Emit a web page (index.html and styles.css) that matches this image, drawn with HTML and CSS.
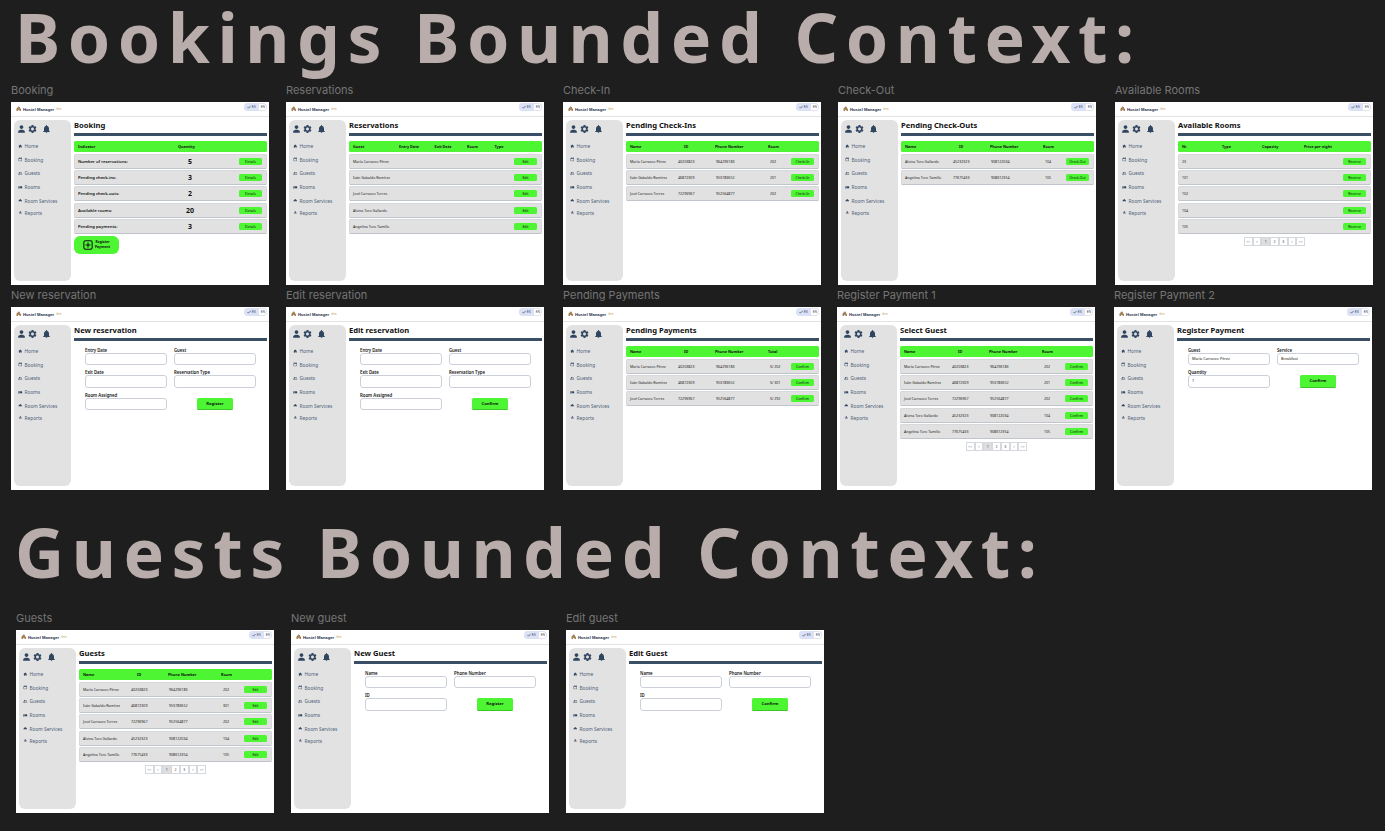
FILE: index.html
```html
<!DOCTYPE html>
<html lang="en">
<head>
  <meta charset="UTF-8">
  <meta name="viewport" content="width=device-width, initial-scale=1.0">
  <title>Hostel Manager bounded contexts</title>
  <link rel="stylesheet" href="styles.css">
</head>
<body>
  <svg class="sprite" xmlns="http://www.w3.org/2000/svg">
    <symbol id="i-home" viewBox="0 0 24 24"><path d="M10 20v-6h4v6h5v-8h3L12 3 2 12h3v8z"/></symbol>
    <symbol id="i-cal" viewBox="0 0 24 24"><path d="M19 4h-1V2h-2v2H8V2H6v2H5a2 2 0 0 0-2 2v14a2 2 0 0 0 2 2h14a2 2 0 0 0 2-2V6a2 2 0 0 0-2-2zm0 16H5V9h14z"/></symbol>
    <symbol id="i-group" viewBox="0 0 24 24"><path d="M16 11c1.66 0 2.99-1.34 2.99-3S17.66 5 16 5s-3 1.34-3 3 1.34 3 3 3zm-8 0c1.66 0 2.99-1.34 2.99-3S9.66 5 8 5 5 6.34 5 8s1.34 3 3 3zm0 2c-2.33 0-7 1.17-7 3.5V19h14v-2.5C15 14.17 10.33 13 8 13zm8 0c-.29 0-.62.02-.97.05 1.16.84 1.97 1.97 1.97 3.45V19h6v-2.5c0-2.33-4.67-3.5-7-3.5z"/></symbol>
    <symbol id="i-bed" viewBox="0 0 24 24"><path d="M7 13c1.66 0 3-1.34 3-3S8.66 7 7 7s-3 1.34-3 3 1.34 3 3 3zm12-6h-8v7H3V5H1v15h2v-3h18v3h2v-9c0-2.21-1.79-4-4-4z"/></symbol>
    <symbol id="i-service" viewBox="0 0 24 24"><path d="M2 17h20v2H2zm11.84-9.21c.1-.24.16-.51.16-.79 0-1.1-.9-2-2-2s-2 .9-2 2c0 .28.06.55.16.79C6.25 8.6 3.27 11.93 3 16h18c-.27-4.07-3.25-7.4-7.16-8.21z"/></symbol>
    <symbol id="i-chart" viewBox="0 0 24 24"><path d="M5 13h4v6H5zM10 5h4v14h-4zm5 8h4v6h-4z"/></symbol>
    <symbol id="i-person" viewBox="0 0 24 24"><path d="M12 12c2.5 0 4.5-2.1 4.5-4.6S14.500 2.800 12 2.800 7.500 4.900 7.500 7.400 9.500 12 12 12zm0 1.500c-3 0-8 1.500-8 4.200V21h16v-3.300c0-2.700-5-4.200-8-4.200z"/></symbol>
    <symbol id="i-gear" viewBox="0 0 24 24"><path d="M19.140 12.940c.04-.3.06-.61.06-.94 0-.32-.02-.64-.07-.94l2.030-1.580c.18-.14.23-.41.12-.61l-1.920-3.320c-.12-.22-.37-.29-.59-.22l-2.390.96c-.5-.38-1.030-.7-1.620-.94l-.36-2.540c-.04-.24-.24-.41-.48-.41h-3.840c-.24 0-.43.17-.47.41l-.36 2.540c-.59.24-1.130.57-1.620.94l-2.390-.96c-.22-.08-.47 0-.59.22L2.740 8.870c-.12.21-.08.47.12.61l2.030 1.580c-.05.3-.09.63-.09.94s.02.64.07.94l-2.030 1.580c-.18.14-.23.41-.12.61l1.920 3.320c.12.22.37.29.59.22l2.390-.96c.5.38 1.030.7 1.620.94l.36 2.540c.05.24.24.41.48.41h3.840c.24 0 .44-.17.47-.41l.36-2.540c.59-.24 1.130-.56 1.620-.94l2.390.96c.22.08.47 0 .59-.22l1.920-3.320c.12-.22.07-.47-.12-.61l-2.010-1.580zM12 15.600c-1.980 0-3.600-1.620-3.600-3.600s1.620-3.600 3.600-3.600 3.600 1.620 3.600 3.600-1.620 3.600-3.600 3.600z"/></symbol>
    <symbol id="i-bell" viewBox="0 0 24 24"><path d="M12 22c1.100 0 2-.9 2-2h-4c0 1.100.9 2 2 2zm6-6v-5c0-3.070-1.630-5.640-4.500-6.320V4c0-.83-.67-1.500-1.500-1.500s-1.500.67-1.500 1.500v.68C7.640 5.360 6 7.920 6 11v5l-2 2v1h16v-1z"/></symbol>
    <symbol id="i-hostel" viewBox="0 0 24 24"><path d="M2 22V11l5-3V4l5-2 5 2v6l5 3v9h-7v-5h-6v5z"/></symbol>
    <symbol id="i-key" viewBox="0 0 24 16"><path d="M1 8a4 4 0 1 0 8 0 4 4 0 1 0-8 0M9 8h14M18 8v4M22 8v3" fill="none" stroke="currentColor" stroke-width="2.500"/></symbol>
    <symbol id="i-check" viewBox="0 0 24 24"><path d="M3 13l6 6L21 6" fill="none" stroke="currentColor" stroke-width="4"/></symbol>
    <symbol id="i-plus" viewBox="0 0 24 24"><rect x="2" y="2" width="20" height="20" rx="4" fill="none" stroke="currentColor" stroke-width="2.500"/><path d="M12 6v12M6 12h12" fill="none" stroke="currentColor" stroke-width="2.500"/></symbol>
  </svg>

  <h1 class="context context-bookings">Bookings Bounded Context:</h1>
  <h1 class="context context-guests">Guests Bounded Context:</h1>

  <!-- Booking -->
  <section class="frame f-booking">
    <p class="frame-name">Booking</p>
    <div class="screen">
      <header class="topbar"><svg class="logo"><use href="#i-hostel"/></svg><b>Hostel Manager</b><svg class="key"><use href="#i-key"/></svg><span class="lang"><span class="lang-on"><svg class="tick"><use href="#i-check"/></svg>ES</span><span class="lang-off">EN</span></span></header>
      <div class="body">
        <aside class="sidebar">
          <div class="tools"><svg class="tool"><use href="#i-person"/></svg><svg class="tool"><use href="#i-gear"/></svg><svg class="tool bell"><use href="#i-bell"/></svg></div>
          <a class="nav"><svg><use href="#i-home"/></svg>Home</a><a class="nav"><svg><use href="#i-cal"/></svg>Booking</a><a class="nav"><svg><use href="#i-group"/></svg>Guests</a><a class="nav"><svg><use href="#i-bed"/></svg>Rooms</a><a class="nav"><svg><use href="#i-service"/></svg>Room Services</a><a class="nav nav-last"><svg><use href="#i-chart"/></svg>Reports</a>
        </aside>
        <main class="main">
          <h2 class="title">Booking</h2>
          <div class="table t-indicator">
            <div class="head"><span>Indicator</span><span class="qty-head">Quantity</span></div>
            <div class="row"><b>Number of reservations:</b><strong>5</strong><a class="btn">Details</a></div>
            <div class="row"><b>Pending check-ins:</b><strong>3</strong><a class="btn">Details</a></div>
            <div class="row"><b>Pending check-outs:</b><strong>2</strong><a class="btn">Details</a></div>
            <div class="row"><b>Available rooms:</b><strong>20</strong><a class="btn">Details</a></div>
            <div class="row"><b>Pending payments:</b><strong>3</strong><a class="btn">Details</a></div>
          </div>
          <a class="add-btn"><svg><use href="#i-plus"/></svg><span>Register<br>Payment</span></a>
        </main>
      </div>
    </div>
  </section>

  <!-- Reservations -->
  <section class="frame f-reservations">
    <p class="frame-name">Reservations</p>
    <div class="screen">
      <header class="topbar"><svg class="logo"><use href="#i-hostel"/></svg><b>Hostel Manager</b><svg class="key"><use href="#i-key"/></svg><span class="lang"><span class="lang-on"><svg class="tick"><use href="#i-check"/></svg>ES</span><span class="lang-off">EN</span></span></header>
      <div class="body">
        <aside class="sidebar">
          <div class="tools"><svg class="tool"><use href="#i-person"/></svg><svg class="tool"><use href="#i-gear"/></svg><svg class="tool bell"><use href="#i-bell"/></svg></div>
          <a class="nav"><svg><use href="#i-home"/></svg>Home</a><a class="nav"><svg><use href="#i-cal"/></svg>Booking</a><a class="nav"><svg><use href="#i-group"/></svg>Guests</a><a class="nav"><svg><use href="#i-bed"/></svg>Rooms</a><a class="nav"><svg><use href="#i-service"/></svg>Room Services</a><a class="nav nav-last"><svg><use href="#i-chart"/></svg>Reports</a>
        </aside>
        <main class="main">
          <h2 class="title">Reservations</h2>
          <div class="table t-reservations">
            <div class="head"><span>Guest</span><span>Entry Date</span><span>Exit Date</span><span>Room</span><span>Type</span></div>
            <div class="row"><span>María Carrasco Pérez</span><a class="btn">Edit</a></div>
            <div class="row"><span>Iván Gabaldo Ramírez</span><a class="btn">Edit</a></div>
            <div class="row"><span>José Carrasco Torres</span><a class="btn">Edit</a></div>
            <div class="row"><span>Alvina Toro Gallardo</span><a class="btn">Edit</a></div>
            <div class="row"><span>Angelina Toro Tamillo</span><a class="btn">Edit</a></div>
          </div>
        </main>
      </div>
    </div>
  </section>

  <!-- Check-In -->
  <section class="frame f-checkin">
    <p class="frame-name">Check-In</p>
    <div class="screen">
      <header class="topbar"><svg class="logo"><use href="#i-hostel"/></svg><b>Hostel Manager</b><svg class="key"><use href="#i-key"/></svg><span class="lang"><span class="lang-on"><svg class="tick"><use href="#i-check"/></svg>ES</span><span class="lang-off">EN</span></span></header>
      <div class="body">
        <aside class="sidebar">
          <div class="tools"><svg class="tool"><use href="#i-person"/></svg><svg class="tool"><use href="#i-gear"/></svg><svg class="tool bell"><use href="#i-bell"/></svg></div>
          <a class="nav"><svg><use href="#i-home"/></svg>Home</a><a class="nav"><svg><use href="#i-cal"/></svg>Booking</a><a class="nav"><svg><use href="#i-group"/></svg>Guests</a><a class="nav"><svg><use href="#i-bed"/></svg>Rooms</a><a class="nav"><svg><use href="#i-service"/></svg>Room Services</a><a class="nav nav-last"><svg><use href="#i-chart"/></svg>Reports</a>
        </aside>
        <main class="main">
          <h2 class="title">Pending Check-Ins</h2>
          <div class="table t-people">
            <div class="head"><span>Name</span><span>ID</span><span>Phone Number</span><span>Room</span></div>
            <div class="row"><span>María Carrasco Pérez</span><span>40203823</span><span>964296183</span><span>202</span><a class="btn">Check-In</a></div>
            <div class="row"><span>Iván Gabaldo Ramírez</span><span>46872309</span><span>953783652</span><span>201</span><a class="btn">Check-In</a></div>
            <div class="row"><span>José Carrasco Torres</span><span>72296967</span><span>952564877</span><span>202</span><a class="btn">Check-In</a></div>
          </div>
        </main>
      </div>
    </div>
  </section>

  <!-- Check-Out -->
  <section class="frame f-checkout">
    <p class="frame-name">Check-Out</p>
    <div class="screen">
      <header class="topbar"><svg class="logo"><use href="#i-hostel"/></svg><b>Hostel Manager</b><svg class="key"><use href="#i-key"/></svg><span class="lang"><span class="lang-on"><svg class="tick"><use href="#i-check"/></svg>ES</span><span class="lang-off">EN</span></span></header>
      <div class="body">
        <aside class="sidebar">
          <div class="tools"><svg class="tool"><use href="#i-person"/></svg><svg class="tool"><use href="#i-gear"/></svg><svg class="tool bell"><use href="#i-bell"/></svg></div>
          <a class="nav"><svg><use href="#i-home"/></svg>Home</a><a class="nav"><svg><use href="#i-cal"/></svg>Booking</a><a class="nav"><svg><use href="#i-group"/></svg>Guests</a><a class="nav"><svg><use href="#i-bed"/></svg>Rooms</a><a class="nav"><svg><use href="#i-service"/></svg>Room Services</a><a class="nav nav-last"><svg><use href="#i-chart"/></svg>Reports</a>
        </aside>
        <main class="main">
          <h2 class="title">Pending Check-Outs</h2>
          <div class="table t-people">
            <div class="head"><span>Name</span><span>ID</span><span>Phone Number</span><span>Room</span></div>
            <div class="row"><span>Alvina Toro Gallardo</span><span>45232323</span><span>908122034</span><span>104</span><a class="btn">Check-Out</a></div>
            <div class="row"><span>Angelina Toro Tamillo</span><span>77675433</span><span>908612354</span><span>105</span><a class="btn">Check-Out</a></div>
          </div>
        </main>
      </div>
    </div>
  </section>

  <!-- Available Rooms -->
  <section class="frame f-rooms">
    <p class="frame-name">Available Rooms</p>
    <div class="screen">
      <header class="topbar"><svg class="logo"><use href="#i-hostel"/></svg><b>Hostel Manager</b><svg class="key"><use href="#i-key"/></svg><span class="lang"><span class="lang-on"><svg class="tick"><use href="#i-check"/></svg>ES</span><span class="lang-off">EN</span></span></header>
      <div class="body">
        <aside class="sidebar">
          <div class="tools"><svg class="tool"><use href="#i-person"/></svg><svg class="tool"><use href="#i-gear"/></svg><svg class="tool bell"><use href="#i-bell"/></svg></div>
          <a class="nav"><svg><use href="#i-home"/></svg>Home</a><a class="nav"><svg><use href="#i-cal"/></svg>Booking</a><a class="nav"><svg><use href="#i-group"/></svg>Guests</a><a class="nav"><svg><use href="#i-bed"/></svg>Rooms</a><a class="nav"><svg><use href="#i-service"/></svg>Room Services</a><a class="nav nav-last"><svg><use href="#i-chart"/></svg>Reports</a>
        </aside>
        <main class="main">
          <h2 class="title">Available Rooms</h2>
          <div class="table t-rooms">
            <div class="head"><span>Nº</span><span>Type</span><span>Capacity</span><span>Price per night</span></div>
            <div class="row"><span>23</span><a class="btn">Reserve</a></div>
            <div class="row"><span>101</span><a class="btn">Reserve</a></div>
            <div class="row"><span>102</span><a class="btn">Reserve</a></div>
            <div class="row"><span>104</span><a class="btn">Reserve</a></div>
            <div class="row"><span>105</span><a class="btn">Reserve</a></div>
          </div>
          <nav class="pager"><a>&lt;&lt;</a><a>&lt;</a><a class="page-on">1</a><a>2</a><a>3</a><a>&gt;</a><a>&gt;&gt;</a></nav>
        </main>
      </div>
    </div>
  </section>

  <!-- New reservation -->
  <section class="frame f-newres">
    <p class="frame-name">New reservation</p>
    <div class="screen">
      <header class="topbar"><svg class="logo"><use href="#i-hostel"/></svg><b>Hostel Manager</b><svg class="key"><use href="#i-key"/></svg><span class="lang"><span class="lang-on"><svg class="tick"><use href="#i-check"/></svg>ES</span><span class="lang-off">EN</span></span></header>
      <div class="body">
        <aside class="sidebar">
          <div class="tools"><svg class="tool"><use href="#i-person"/></svg><svg class="tool"><use href="#i-gear"/></svg><svg class="tool bell"><use href="#i-bell"/></svg></div>
          <a class="nav"><svg><use href="#i-home"/></svg>Home</a><a class="nav"><svg><use href="#i-cal"/></svg>Booking</a><a class="nav"><svg><use href="#i-group"/></svg>Guests</a><a class="nav"><svg><use href="#i-bed"/></svg>Rooms</a><a class="nav"><svg><use href="#i-service"/></svg>Room Services</a><a class="nav nav-last"><svg><use href="#i-chart"/></svg>Reports</a>
        </aside>
        <main class="main">
          <h2 class="title">New reservation</h2>
          <form class="form">
            <div class="field"><label>Entry Date</label><div class="input"></div></div>
            <div class="field"><label>Guest</label><div class="input"></div></div>
            <div class="field"><label>Exit Date</label><div class="input"></div></div>
            <div class="field"><label>Reservation Type</label><div class="input"></div></div>
            <div class="field"><label>Room Assigned</label><div class="input"></div></div>
            <a class="submit">Register</a>
          </form>
        </main>
      </div>
    </div>
  </section>

  <!-- Edit reservation -->
  <section class="frame f-editres">
    <p class="frame-name">Edit reservation</p>
    <div class="screen">
      <header class="topbar"><svg class="logo"><use href="#i-hostel"/></svg><b>Hostel Manager</b><svg class="key"><use href="#i-key"/></svg><span class="lang"><span class="lang-on"><svg class="tick"><use href="#i-check"/></svg>ES</span><span class="lang-off">EN</span></span></header>
      <div class="body">
        <aside class="sidebar">
          <div class="tools"><svg class="tool"><use href="#i-person"/></svg><svg class="tool"><use href="#i-gear"/></svg><svg class="tool bell"><use href="#i-bell"/></svg></div>
          <a class="nav"><svg><use href="#i-home"/></svg>Home</a><a class="nav"><svg><use href="#i-cal"/></svg>Booking</a><a class="nav"><svg><use href="#i-group"/></svg>Guests</a><a class="nav"><svg><use href="#i-bed"/></svg>Rooms</a><a class="nav"><svg><use href="#i-service"/></svg>Room Services</a><a class="nav nav-last"><svg><use href="#i-chart"/></svg>Reports</a>
        </aside>
        <main class="main">
          <h2 class="title">Edit reservation</h2>
          <form class="form">
            <div class="field"><label>Entry Date</label><div class="input"></div></div>
            <div class="field"><label>Guest</label><div class="input"></div></div>
            <div class="field"><label>Exit Date</label><div class="input"></div></div>
            <div class="field"><label>Reservation Type</label><div class="input"></div></div>
            <div class="field"><label>Room Assigned</label><div class="input"></div></div>
            <a class="submit">Confirm</a>
          </form>
        </main>
      </div>
    </div>
  </section>

  <!-- Pending Payments -->
  <section class="frame f-payments">
    <p class="frame-name">Pending Payments</p>
    <div class="screen">
      <header class="topbar"><svg class="logo"><use href="#i-hostel"/></svg><b>Hostel Manager</b><svg class="key"><use href="#i-key"/></svg><span class="lang"><span class="lang-on"><svg class="tick"><use href="#i-check"/></svg>ES</span><span class="lang-off">EN</span></span></header>
      <div class="body">
        <aside class="sidebar">
          <div class="tools"><svg class="tool"><use href="#i-person"/></svg><svg class="tool"><use href="#i-gear"/></svg><svg class="tool bell"><use href="#i-bell"/></svg></div>
          <a class="nav"><svg><use href="#i-home"/></svg>Home</a><a class="nav"><svg><use href="#i-cal"/></svg>Booking</a><a class="nav"><svg><use href="#i-group"/></svg>Guests</a><a class="nav"><svg><use href="#i-bed"/></svg>Rooms</a><a class="nav"><svg><use href="#i-service"/></svg>Room Services</a><a class="nav nav-last"><svg><use href="#i-chart"/></svg>Reports</a>
        </aside>
        <main class="main">
          <h2 class="title">Pending Payments</h2>
          <div class="table t-people">
            <div class="head"><span>Name</span><span>ID</span><span>Phone Number</span><span>Total</span></div>
            <div class="row"><span>María Carrasco Pérez</span><span>40203823</span><span>964296183</span><span>S/ 202</span><a class="btn">Confirm</a></div>
            <div class="row"><span>Iván Gabaldo Ramírez</span><span>46872309</span><span>953783652</span><span>S/ 301</span><a class="btn">Confirm</a></div>
            <div class="row"><span>José Carrasco Torres</span><span>72296967</span><span>952564877</span><span>S/ 292</span><a class="btn">Confirm</a></div>
          </div>
        </main>
      </div>
    </div>
  </section>

  <!-- Register Payment 1 -->
  <section class="frame f-pay1">
    <p class="frame-name">Register Payment 1</p>
    <div class="screen">
      <header class="topbar"><svg class="logo"><use href="#i-hostel"/></svg><b>Hostel Manager</b><svg class="key"><use href="#i-key"/></svg><span class="lang"><span class="lang-on"><svg class="tick"><use href="#i-check"/></svg>ES</span><span class="lang-off">EN</span></span></header>
      <div class="body">
        <aside class="sidebar">
          <div class="tools"><svg class="tool"><use href="#i-person"/></svg><svg class="tool"><use href="#i-gear"/></svg><svg class="tool bell"><use href="#i-bell"/></svg></div>
          <a class="nav"><svg><use href="#i-home"/></svg>Home</a><a class="nav"><svg><use href="#i-cal"/></svg>Booking</a><a class="nav"><svg><use href="#i-group"/></svg>Guests</a><a class="nav"><svg><use href="#i-bed"/></svg>Rooms</a><a class="nav"><svg><use href="#i-service"/></svg>Room Services</a><a class="nav nav-last"><svg><use href="#i-chart"/></svg>Reports</a>
        </aside>
        <main class="main">
          <h2 class="title">Select Guest</h2>
          <div class="table t-people">
            <div class="head"><span>Name</span><span>ID</span><span>Phone Number</span><span>Room</span></div>
            <div class="row"><span>María Carrasco Pérez</span><span>40203823</span><span>964296183</span><span>202</span><a class="btn">Confirm</a></div>
            <div class="row"><span>Iván Gabaldo Ramírez</span><span>46872309</span><span>953783652</span><span>201</span><a class="btn">Confirm</a></div>
            <div class="row"><span>José Carrasco Torres</span><span>72296967</span><span>952564877</span><span>202</span><a class="btn">Confirm</a></div>
            <div class="row"><span>Alvina Toro Gallardo</span><span>45232323</span><span>908122034</span><span>104</span><a class="btn">Confirm</a></div>
            <div class="row"><span>Angelina Toro Tamillo</span><span>77675433</span><span>908612354</span><span>105</span><a class="btn">Confirm</a></div>
          </div>
          <nav class="pager"><a>&lt;&lt;</a><a>&lt;</a><a class="page-on">1</a><a>2</a><a>3</a><a>&gt;</a><a>&gt;&gt;</a></nav>
        </main>
      </div>
    </div>
  </section>

  <!-- Register Payment 2 -->
  <section class="frame f-pay2">
    <p class="frame-name">Register Payment 2</p>
    <div class="screen">
      <header class="topbar"><svg class="logo"><use href="#i-hostel"/></svg><b>Hostel Manager</b><svg class="key"><use href="#i-key"/></svg><span class="lang"><span class="lang-on"><svg class="tick"><use href="#i-check"/></svg>ES</span><span class="lang-off">EN</span></span></header>
      <div class="body">
        <aside class="sidebar">
          <div class="tools"><svg class="tool"><use href="#i-person"/></svg><svg class="tool"><use href="#i-gear"/></svg><svg class="tool bell"><use href="#i-bell"/></svg></div>
          <a class="nav"><svg><use href="#i-home"/></svg>Home</a><a class="nav"><svg><use href="#i-cal"/></svg>Booking</a><a class="nav"><svg><use href="#i-group"/></svg>Guests</a><a class="nav"><svg><use href="#i-bed"/></svg>Rooms</a><a class="nav"><svg><use href="#i-service"/></svg>Room Services</a><a class="nav nav-last"><svg><use href="#i-chart"/></svg>Reports</a>
        </aside>
        <main class="main">
          <h2 class="title">Register Payment</h2>
          <form class="form">
            <div class="field"><label>Guest</label><div class="input">María Carrasco Pérez</div></div>
            <div class="field"><label>Service</label><div class="input">Breakfast</div></div>
            <div class="field"><label>Quantity</label><div class="input">1</div></div>
            <a class="submit">Confirm</a>
          </form>
        </main>
      </div>
    </div>
  </section>

  <!-- Guests -->
  <section class="frame f-guests">
    <p class="frame-name">Guests</p>
    <div class="screen">
      <header class="topbar"><svg class="logo"><use href="#i-hostel"/></svg><b>Hostel Manager</b><svg class="key"><use href="#i-key"/></svg><span class="lang"><span class="lang-on"><svg class="tick"><use href="#i-check"/></svg>ES</span><span class="lang-off">EN</span></span></header>
      <div class="body">
        <aside class="sidebar">
          <div class="tools"><svg class="tool"><use href="#i-person"/></svg><svg class="tool"><use href="#i-gear"/></svg><svg class="tool bell"><use href="#i-bell"/></svg></div>
          <a class="nav"><svg><use href="#i-home"/></svg>Home</a><a class="nav"><svg><use href="#i-cal"/></svg>Booking</a><a class="nav"><svg><use href="#i-group"/></svg>Guests</a><a class="nav"><svg><use href="#i-bed"/></svg>Rooms</a><a class="nav"><svg><use href="#i-service"/></svg>Room Services</a><a class="nav nav-last"><svg><use href="#i-chart"/></svg>Reports</a>
        </aside>
        <main class="main">
          <h2 class="title">Guests</h2>
          <div class="table t-people">
            <div class="head"><span>Name</span><span>ID</span><span>Phone Number</span><span>Room</span></div>
            <div class="row"><span>María Carrasco Pérez</span><span>40203823</span><span>964296183</span><span>202</span><a class="btn">Edit</a></div>
            <div class="row"><span>Iván Gabaldo Ramírez</span><span>46872309</span><span>953783652</span><span>301</span><a class="btn">Edit</a></div>
            <div class="row"><span>José Carrasco Torres</span><span>72296967</span><span>952564877</span><span>202</span><a class="btn">Edit</a></div>
            <div class="row"><span>Alvina Toro Gallardo</span><span>45232323</span><span>908122034</span><span>104</span><a class="btn">Edit</a></div>
            <div class="row"><span>Angelina Toro Tamillo</span><span>77675433</span><span>908612354</span><span>105</span><a class="btn">Edit</a></div>
          </div>
          <nav class="pager"><a>&lt;&lt;</a><a>&lt;</a><a class="page-on">1</a><a>2</a><a>3</a><a>&gt;</a><a>&gt;&gt;</a></nav>
        </main>
      </div>
    </div>
  </section>

  <!-- New guest -->
  <section class="frame f-newguest">
    <p class="frame-name">New guest</p>
    <div class="screen">
      <header class="topbar"><svg class="logo"><use href="#i-hostel"/></svg><b>Hostel Manager</b><svg class="key"><use href="#i-key"/></svg><span class="lang"><span class="lang-on"><svg class="tick"><use href="#i-check"/></svg>ES</span><span class="lang-off">EN</span></span></header>
      <div class="body">
        <aside class="sidebar">
          <div class="tools"><svg class="tool"><use href="#i-person"/></svg><svg class="tool"><use href="#i-gear"/></svg><svg class="tool bell"><use href="#i-bell"/></svg></div>
          <a class="nav"><svg><use href="#i-home"/></svg>Home</a><a class="nav"><svg><use href="#i-cal"/></svg>Booking</a><a class="nav"><svg><use href="#i-group"/></svg>Guests</a><a class="nav"><svg><use href="#i-bed"/></svg>Rooms</a><a class="nav"><svg><use href="#i-service"/></svg>Room Services</a><a class="nav nav-last"><svg><use href="#i-chart"/></svg>Reports</a>
        </aside>
        <main class="main">
          <h2 class="title">New Guest</h2>
          <form class="form">
            <div class="field"><label>Name</label><div class="input"></div></div>
            <div class="field"><label>Phone Number</label><div class="input"></div></div>
            <div class="field"><label>ID</label><div class="input"></div></div>
            <a class="submit">Register</a>
          </form>
        </main>
      </div>
    </div>
  </section>

  <!-- Edit guest -->
  <section class="frame f-editguest">
    <p class="frame-name">Edit guest</p>
    <div class="screen">
      <header class="topbar"><svg class="logo"><use href="#i-hostel"/></svg><b>Hostel Manager</b><svg class="key"><use href="#i-key"/></svg><span class="lang"><span class="lang-on"><svg class="tick"><use href="#i-check"/></svg>ES</span><span class="lang-off">EN</span></span></header>
      <div class="body">
        <aside class="sidebar">
          <div class="tools"><svg class="tool"><use href="#i-person"/></svg><svg class="tool"><use href="#i-gear"/></svg><svg class="tool bell"><use href="#i-bell"/></svg></div>
          <a class="nav"><svg><use href="#i-home"/></svg>Home</a><a class="nav"><svg><use href="#i-cal"/></svg>Booking</a><a class="nav"><svg><use href="#i-group"/></svg>Guests</a><a class="nav"><svg><use href="#i-bed"/></svg>Rooms</a><a class="nav"><svg><use href="#i-service"/></svg>Room Services</a><a class="nav nav-last"><svg><use href="#i-chart"/></svg>Reports</a>
        </aside>
        <main class="main">
          <h2 class="title">Edit Guest</h2>
          <form class="form">
            <div class="field"><label>Name</label><div class="input"></div></div>
            <div class="field"><label>Phone Number</label><div class="input"></div></div>
            <div class="field"><label>ID</label><div class="input"></div></div>
            <a class="submit">Confirm</a>
          </form>
        </main>
      </div>
    </div>
  </section>
</body>
</html>
```

FILE: styles.css
```css
html, body {
  margin: 0;
  padding: 0;
  height: 100%;
  overflow: hidden;
  background: #1e1e1e;
  font-family: "Noto Sans", "Open Sans", sans-serif;
}
.sprite {
  position: absolute;
  width: 0;
  height: 0;
}

/* big section headings on the canvas */
.context {
  position: absolute;
  left: 15px;
  margin: 0;
  font-size: 68px;
  line-height: 72px;
  font-weight: 700;
  letter-spacing: 7.500px;
  white-space: nowrap;
  color: #b9adac;
}
.context-bookings { top: 1px; }
.context-guests { top: 516px; }

/* frames on the canvas */
.frame {
  position: absolute;
  width: 258px;
}
.frame-name {
  margin: 0;
  height: 19px;
  font-family: Inter, sans-serif;
  font-size: 11px;
  line-height: 14px;
  color: #757575;
  white-space: nowrap;
}
.f-booking { left: 11px; top: 83px; }
.f-reservations { left: 286px; top: 83px; }
.f-checkin { left: 563px; top: 83px; }
.f-checkout { left: 838px; top: 83px; }
.f-rooms { left: 1115px; top: 83px; }
.f-newres { left: 11px; top: 288px; }
.f-editres { left: 286px; top: 288px; }
.f-payments { left: 563px; top: 288px; }
.f-pay1 { left: 837px; top: 288px; }
.f-pay2 { left: 1114px; top: 288px; }
.f-guests { left: 16px; top: 611px; }
.f-newguest { left: 291px; top: 611px; }
.f-editguest { left: 566px; top: 611px; }

.screen {
  display: flex;
  flex-direction: column;
  height: 183px;
  background: #fff;
}

/* top bar */
.topbar {
  display: flex;
  align-items: center;
  flex: none;
  box-sizing: border-box;
  height: 15px;
  padding: 0 2px 0 5px;
  border-bottom: 1px solid #e2e2e2;
  font-size: 4.200px;
  color: #1c2e4a;
}
.topbar b {
  font-family: "Liberation Sans", sans-serif;
  margin-left: 1.500px;
}
.logo {
  width: 5.500px;
  height: 5.500px;
  fill: #a5835a;
}
.key {
  width: 6px;
  height: 3.500px;
  margin-left: 2px;
  color: #c8a76c;
}
.lang {
  display: flex;
  margin-left: auto;
  margin-top: -5px;
  height: 8px;
  line-height: 8px;
  font-size: 3px;
  font-family: "Liberation Sans", sans-serif;
  color: #33415c;
  border-radius: 4px;
  overflow: hidden;
  box-shadow: inset 0 0 0 1px #e4e4ec;
}
.lang-on {
  display: flex;
  align-items: center;
  gap: 1px;
  padding: 0 3px 0 3px;
  background: #dbe2f6;
}
.lang-off {
  padding: 0 2px 0 2px;
}
.tick {
  width: 4px;
  height: 4px;
  color: #33415c;
}

.body {
  display: flex;
  flex: 1;
  min-height: 0;
  padding: 3px 2px 4px 3px;
  gap: 3px;
}

/* sidebar */
.sidebar {
  flex: none;
  width: 57px;
  box-sizing: border-box;
  padding: 4px 0 0 2px;
  background: #e2e2e2;
  border-radius: 6px;
}
.tools {
  display: flex;
  height: 10px;
  margin-bottom: 5px;
}
.tool {
  width: 11px;
  height: 10px;
  fill: #2f4560;
}
.tool.bell { margin-left: 3px; }
.nav {
  display: flex;
  align-items: center;
  gap: 2px;
  height: 13.700px;
  margin-left: 2px;
  font-size: 4.800px;
  color: #4d5f78;
  white-space: nowrap;
}
.nav svg {
  width: 4.500px;
  height: 4.500px;
  fill: #2f4560;
}
.nav-last { margin-top: -1.700px; }

/* main column */
.main {
  flex: 1;
  min-width: 0;
}
.title {
  margin: 0 0 5px;
  height: 13px;
  box-sizing: content-box;
  font-size: 7.600px;
  line-height: 11px;
  font-weight: 700;
  color: #111;
  white-space: nowrap;
  border-bottom: 3px solid #3a4f66;
}

/* tables */
.table {
  display: flex;
  flex-direction: column;
  gap: 1.300px;
}
.head, .row {
  display: grid;
  align-items: center;
  box-sizing: border-box;
  padding: 0 5px 0 4px;
  white-space: nowrap;
}
.head {
  height: 10.700px;
  margin-bottom: 0.700px;
  background: #4df533;
  border-radius: 1.500px;
  font-size: 3.800px;
  font-weight: 700;
  color: #111;
}
.row {
  height: 15px;
  background: #e1e1e1;
  border: 1px solid #d6d8dc;
  border-bottom-color: #c0c4cb;
  border-radius: 1.500px;
  font-size: 3.600px;
  color: #222;
  padding: 0 4px 0 3px;
}
.btn {
  justify-self: end;
  width: 23px;
  height: 7px;
  background: #4df533;
  border-radius: 1.500px;
  font-size: 3.400px;
  line-height: 7px;
  text-align: center;
  color: #111;
}
.t-people .head { grid-template-columns: 54px 31px 53px 1fr; }
.t-people .row { grid-template-columns: 48px 38px 54px 1fr auto; }
.t-reservations .head { grid-template-columns: 46px 35.500px 32.500px 27.500px 1fr; }
.t-reservations .row { grid-template-columns: 1fr auto; }
.t-rooms .head { grid-template-columns: 40px 40px 42px 1fr; }
.t-rooms .row { grid-template-columns: 1fr auto; }
.t-indicator .head { grid-template-columns: 100px 1fr; }
.t-indicator .row { grid-template-columns: 100px 24px 1fr; }
.t-indicator .row b { font-size: 4.200px; font-weight: 600; color: #111; }
.t-indicator .row strong { font-size: 7px; text-align: center; color: #111; }
.t-indicator .row .btn { grid-column: 3; }

/* register payment shortcut */
.add-btn {
  display: flex;
  align-items: center;
  justify-content: center;
  gap: 2px;
  width: 45px;
  height: 18px;
  margin-top: 2px;
  background: #4df533;
  border-radius: 6px;
  font-size: 3.400px;
  font-weight: 700;
  line-height: 4.500px;
  text-align: center;
  color: #111;
}
.add-btn svg {
  width: 10px;
  height: 10px;
  color: #111;
}

/* pager */
.pager {
  display: flex;
  justify-content: center;
  margin-top: 3.500px;
}
.pager a {
  box-sizing: border-box;
  width: 8.800px;
  height: 9px;
  border: 1px solid #d6d8e0;
  background: #fff;
  font-size: 3.600px;
  line-height: 7px;
  text-align: center;
  color: #444;
}
.pager .page-on { background: #dedede; }

/* forms */
.form {
  display: grid;
  grid-template-columns: 82px 82px;
  column-gap: 7px;
  row-gap: 5px;
  padding-left: 11px;
  padding-top: 1.500px;
}
.field label {
  display: block;
  height: 5px;
  font-size: 4.300px;
  line-height: 5px;
  font-weight: 600;
  color: #111;
  white-space: nowrap;
}
.input {
  box-sizing: border-box;
  height: 12.500px;
  padding-left: 3px;
  border: 1px solid #ccd0da;
  border-radius: 3px;
  font-size: 3.800px;
  line-height: 10.500px;
  color: #222;
  white-space: nowrap;
}
.submit {
  justify-self: center;
  align-self: end;
  box-sizing: border-box;
  width: 36px;
  height: 12.500px;
  background: #4df533;
  border-bottom: 1px solid #3fc42c;
  border-radius: 1.500px;
  font-size: 4.200px;
  font-weight: 700;
  line-height: 11.500px;
  text-align: center;
  color: #111;
}
```
